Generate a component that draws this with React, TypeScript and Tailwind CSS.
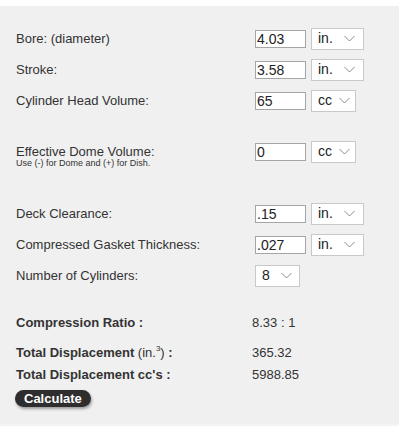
import React from 'react';

type Row = {
  label: string;
  value: string;
  unit: string;
  unitWidth: string;
};

const topRows: Row[] = [
  { label: 'Bore: (diameter)', value: '4.03', unit: 'in.', unitWidth: 'w-[53px] pr-[8px]' },
  { label: 'Stroke:', value: '3.58', unit: 'in.', unitWidth: 'w-[53px] pr-[8px]' },
  { label: 'Cylinder Head Volume:', value: '65', unit: 'cc', unitWidth: 'w-[45px] pr-[5px]' },
];

const deckRows: Row[] = [
  { label: 'Deck Clearance:', value: '.15', unit: 'in.', unitWidth: 'w-[53px] pr-[8px]' },
  { label: 'Compressed Gasket Thickness:', value: '.027', unit: 'in.', unitWidth: 'w-[53px] pr-[8px]' },
];

const Chevron = () => (
  <svg width="11" height="7" viewBox="0 0 11 7" className="shrink-0">
    <path d="M0.5 1 L5.5 6 L10.5 1" fill="none" stroke="#8a8a8a" strokeWidth="1" />
  </svg>
);

const FakeSelect = ({ text, width }: { text: string; width: string }) => (
  <div
    className={`${width} h-[22px] bg-white border border-[#c8c8c8] flex items-center justify-between pl-[6px] text-[14px] text-[#222]`}
  >
    <span>{text}</span>
    <Chevron />
  </div>
);

const ValueInput = ({ value }: { value: string }) => (
  <input
    readOnly
    value={value}
    className="w-[51px] h-[18px] bg-white border border-[#a5a5a5] px-[1px] text-[14px] leading-[16px] text-[#222] outline-none"
  />
);

const InputRow = ({ row }: { row: Row }) => (
  <div className="flex items-center h-[31px]">
    <div className="w-[239px] text-[13px] text-[#333]">{row.label}</div>
    <div className="flex items-center gap-[5px]">
      <ValueInput value={row.value} />
      <FakeSelect text={row.unit} width={row.unitWidth} />
    </div>
  </div>
);

export default function App() {
  return (
    <div
      className="w-[407px] h-[438px] bg-white pt-[6px]"
      style={{ fontFamily: '"Liberation Sans", Arial, sans-serif' }}
    >
      <div className="w-[399px] h-[420px] bg-[#f0f0f0] pl-4 pt-[17px] border-b-2 border-[#f4f4f4]">
        {topRows.map((r) => (
          <InputRow key={r.label} row={r} />
        ))}

        {/* dome / dish */}
        <div className="flex items-start h-[31px] mt-[20px]">
          <div className="w-[239px] text-[#333]">
            <div className="h-[31px] flex items-center text-[13px]">Effective Dome Volume:</div>
            <div className="text-[9px] leading-[11px] -mt-[9px]">Use (-) for Dome and (+) for Dish.</div>
          </div>
          <div className="h-[31px] flex items-center gap-[5px]">
            <ValueInput value="0" />
            <FakeSelect text="cc" width="w-[45px] pr-[5px]" />
          </div>
        </div>

        <div className="mt-[31px]">
          {deckRows.map((r) => (
            <InputRow key={r.label} row={r} />
          ))}
          <div className="flex items-center h-[31px]">
            <div className="w-[239px] text-[13px] text-[#333]">Number of Cylinders:</div>
            <FakeSelect text="8" width="w-[45px] pr-[7px]" />
          </div>
        </div>

        {/* results */}
        <div className="mt-[21px] text-[13px] text-[#333]">
          <div className="flex items-center h-[22px]">
            <div className="w-[236px] font-bold">Compression Ratio :</div>
            <div>8.33 : 1</div>
          </div>
          <div className="flex items-center h-[22px] mt-[8px]">
            <div className="w-[236px] font-bold">
              Total Displacement <span className="font-normal">(in.<sup className="text-[8px] -top-[6px]">3</sup>)</span> :
            </div>
            <div>365.32</div>
          </div>
          <div className="flex items-center h-[22px]">
            <div className="w-[236px] font-bold">Total Displacement cc's :</div>
            <div>5988.85</div>
          </div>
        </div>

        <button className="mt-[4px] -ml-[1px] h-[17px] px-[9px] rounded-full bg-[#2e2e2e] text-white text-[13px] font-bold leading-[17px] shadow-[1px_2px_3px_rgba(0,0,0,0.35)]">
          Calculate
        </button>
      </div>
    </div>
  );
}
